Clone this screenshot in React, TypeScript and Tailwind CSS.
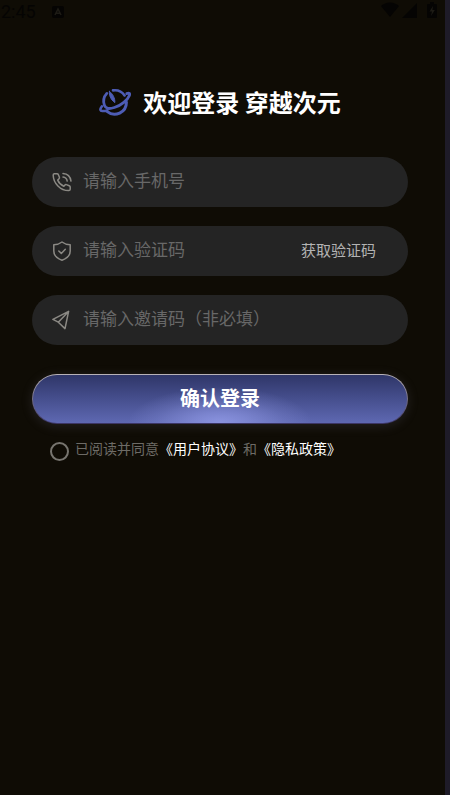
import type { ReactNode } from 'react';

function StatusBar() {
  return (
    <header className="flex h-6 items-center justify-between pr-2 pl-px text-[#050403]">
      <div className="flex items-center gap-4">
        <span className="font-[Roboto,sans-serif] text-lg leading-6">2:45</span>
        <svg className="size-3" viewBox="0 0 12 12" aria-hidden="true">
          <rect width="12" height="12" rx="2" fill="currentColor" />
          <path d="M3 9 6 3l3 6M4.2 7.3h3.6" fill="none" stroke="#1d1b15" strokeWidth="1.6" />
        </svg>
      </div>
      <div className="flex items-center pb-1">
        <svg className="h-4 w-[18px]" viewBox="0 0 18 16" fill="currentColor" aria-hidden="true">
          <path d="M0 4C5 -.7 13 -.7 18 4L9 15z" />
        </svg>
        <svg className="mr-2 ml-[3px] size-[15px]" viewBox="0 0 15 15" fill="currentColor" aria-hidden="true">
          <path d="M15 0v15H0z" />
        </svg>
        <svg className="ml-[2px] h-4 w-[10px]" viewBox="0 0 10 16" aria-hidden="true">
          <path d="M3 0h4v2h2q1 0 1 1v12q0 1-1 1H1q-1 0-1-1V3q0-1 1-1h2z" fill="currentColor" />
          <path d="M6 4 2.5 9.5H5L4 14l3.8-6H5.4z" fill="#1d1b15" />
        </svg>
      </div>
    </header>
  );
}

function Logo() {
  return (
    <svg className="h-7 w-8" viewBox="0 0 32 28" fill="none" stroke="#4d5cb4" strokeLinecap="round" aria-hidden="true">
      <path d="M7.8 5.4A12 12 0 0 0 5.4 17.4Q6.4 19.6 8.8 20.4" strokeWidth="2.8" />
      <path d="M14 2.4A12 12 0 0 1 25.6 7.4" strokeWidth="2.6" />
      <path d="M27.4 14.2A11.8 11.8 0 0 1 8 23.4" strokeWidth="3" />
      <path d="M10.4 3.4C9.8 7 11.6 11.4 15.8 14.6C16.2 10.4 13.8 5.8 10.4 3.4z" fill="#4d5cb4" strokeWidth="1" />
      <path
        d="M27.8 5.6C30.2 4.5 31.2 5.6 30.4 7.4C28.6 12 22.4 17.2 15.4 19.5C12.6 20.4 10.6 20.7 8.8 20.4"
        strokeWidth="2.8"
      />
      <path d="M2.8 18.4C.6 21.4 1 23.4 4 23Q6 22.9 8 22.4" strokeWidth="2.6" />
    </svg>
  );
}

function FieldIcon({ children }: { children: ReactNode }) {
  return (
    <svg
      className="size-5 shrink-0 text-[#8b8984]"
      viewBox="0 0 20 20"
      fill="none"
      stroke="currentColor"
      strokeWidth="1.5"
      strokeLinecap="round"
      strokeLinejoin="round"
      aria-hidden="true"
    >
      {children}
    </svg>
  );
}

interface FieldProps {
  label: string;
  type?: string;
  icon: ReactNode;
  action?: ReactNode;
}

function Field({ label, type = 'text', icon, action }: FieldProps) {
  return (
    <div className="flex h-[50px] items-center rounded-full bg-[#242424] pr-8 pl-5">
      <FieldIcon>{icon}</FieldIcon>
      <input
        type={type}
        aria-label={label}
        placeholder={label}
        className="mb-1 ml-[11px] min-w-0 flex-1 bg-transparent text-[17px] text-white outline-none placeholder:text-[#686868]"
      />
      {action}
    </div>
  );
}

export default function App() {
  return (
    <div className="flex min-h-screen bg-[#0f0c05] font-['Noto_Sans_CJK_SC',sans-serif]">
      <div className="min-w-0 flex-1">
        <StatusBar />
        <main className="pt-[60px] pr-[37px] pl-8">
          <div className="flex h-9 items-center justify-center gap-3">
            <Logo />
            <h1 className="text-2xl font-bold text-white">欢迎登录 穿越次元</h1>
          </div>

          <form className="mt-[37px]" onSubmit={(e) => e.preventDefault()}>
            <div className="flex flex-col gap-[19px]">
              <Field
                label="请输入手机号"
                type="tel"
                icon={
                  <>
                    <path d="M2.2 1.8H5Q6 1.8 6.4 2.8L7.4 5.3Q7.7 6.2 7 6.8L5.7 8.1C6.8 10.8 9 13 11.8 14.3L13 12.9Q13.6 12.2 14.5 12.6L17.2 13.7Q18.2 14.1 18.2 15.1V17.2Q18.1 18.5 16.8 18.6C8.4 18.7 1.4 11.2 1.2 3.2Q1.1 2 2.2 1.8z" />
                    <path d="M11 5.1Q14.6 5.6 15.2 9.1" />
                    <path d="M11 1.5Q18 2 19 9.1" />
                  </>
                }
              />
              <Field
                label="请输入验证码"
                icon={
                  <>
                    <path d="M10 1Q13.5 3.7 18.2 3.8V10Q18.2 16.2 10 19.2Q1.8 16.2 1.8 10V3.8Q6.5 3.7 10 1z" />
                    <path d="m6.8 10 2.5 2.4 4-4.1" />
                  </>
                }
                action={
                  <button type="button" className="mb-[2px] text-[15px] text-[#b3b3b3]">
                    获取验证码
                  </button>
                }
              />
              <Field
                label="请输入邀请码（非必填）"
                icon={<path d="M16.6 1.4.9 9.3 6.3 12.2 13 18.6 16.6 1.4 6.3 12.2" />}
              />
            </div>

            <button
              type="submit"
              className="mt-[29px] flex h-[50px] w-full rounded-full bg-linear-to-b from-[#b9b3b8] via-[#777189] to-[#3b3565] p-px shadow-[0_2px_12px_rgba(120,120,150,0.2)]"
            >
              <span className="flex h-full w-full items-center justify-center rounded-full bg-[radial-gradient(ellipse_92px_36px_at_50%_100%,#8a93df,#8a93dfb3_30%,#8a93df40_70%,#8a93df00),linear-gradient(#2f3668,#464f8e_50%,#5e68b2)] pb-[2px] text-xl font-bold text-white">
                确认登录
              </span>
            </button>

            <div className="mt-3 flex items-center pl-[18px] text-sm leading-6 text-[#6d6b66]">
              <input
                id="agree"
                type="checkbox"
                className="mt-1 size-[19px] shrink-0 appearance-none rounded-full border-2 border-[#77756f] checked:bg-[#4d5cb4]"
              />
              <p className="mb-[2px] ml-[6px] whitespace-nowrap">
                <label htmlFor="agree">已阅读并同意</label>
                <a href="#terms" className="text-white">《用户协议》</a>
                和
                <a href="#privacy" className="text-white">《隐私政策》</a>
              </p>
            </div>
          </form>
        </main>
      </div>
      <div className="w-[5px] bg-[#1e1b28]" />
    </div>
  );
}
